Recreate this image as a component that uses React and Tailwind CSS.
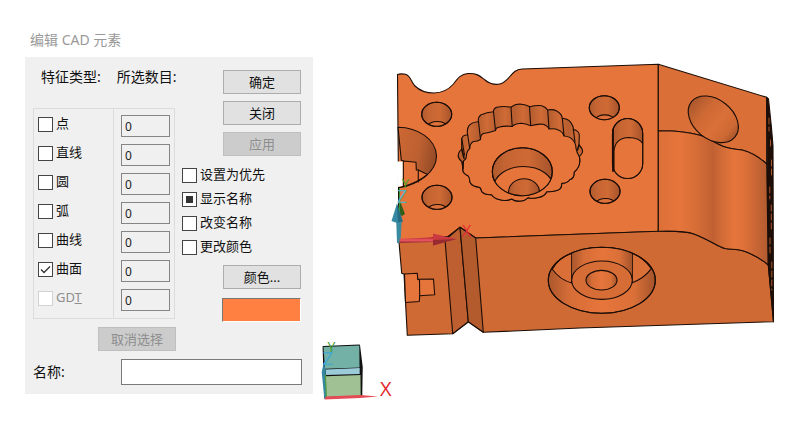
import { useEffect, useRef } from "react";

const FONT = 'font-["Noto_Sans","Noto_Sans_CJK_SC",sans-serif]';

const featureTypes = [
  { id: "point", label: "点" },
  { id: "line", label: "直线" },
  { id: "circle", label: "圆" },
  { id: "arc", label: "弧" },
  { id: "curve", label: "曲线" },
  { id: "surface", label: "曲面", checked: true },
  { id: "gdt", label: "GDT", disabled: true },
];

const options = [
  { id: "priority", label: "设置为优先" },
  { id: "showName", label: "显示名称", mixed: true },
  { id: "rename", label: "改变名称" },
  { id: "recolor", label: "更改颜色" },
];

function CheckBox({ id, checked, mixed, disabled }) {
  const ref = useRef(null);
  useEffect(() => {
    if (ref.current) ref.current.indeterminate = Boolean(mixed);
  }, [mixed]);
  return (
    <span className="relative flex size-[15px] shrink-0">
      <input
        ref={ref}
        id={id}
        type="checkbox"
        defaultChecked={checked}
        disabled={disabled}
        className="peer size-[15px] appearance-none border border-[#444] bg-white disabled:border-[#d2d2d2]"
      />
      <svg
        viewBox="0 0 15 15"
        className="pointer-events-none absolute inset-0 hidden size-[15px] peer-checked:block"
      >
        <path d="M3 7.5 6 10.5 12 4.5" fill="none" stroke="#333" strokeWidth="1.3" />
      </svg>
      <span className="pointer-events-none absolute inset-[4px] hidden bg-[#333] peer-indeterminate:block" />
    </span>
  );
}

function Button({ children, disabled }) {
  return (
    <button
      type="button"
      disabled={disabled}
      className="h-6 w-[78px] border border-[#adadad] bg-[#e1e1e1] text-[13px] leading-5 text-[#111] disabled:border-[#bfbfbf] disabled:bg-[#cccccc] disabled:text-[#8e8e8e]"
    >
      {children}
    </button>
  );
}

function EditDialog() {
  return (
    <form className="w-72 shrink-0 text-[#111]">
      <h1 className="h-8 px-[5px] text-sm leading-[30px] text-[#999]">编辑 CAD 元素</h1>
      <div className="bg-[#f0f0f0] px-2 pt-[9px] pb-[9px]">
        <div className="flex gap-[7px]">
          <div className="w-[142px]">
            <div className="flex h-[42px] gap-4 px-2 text-sm leading-[22px] whitespace-nowrap">
              <span>特征类型:</span>
              <span>所选数目:</span>
            </div>
            <fieldset className="border border-[#dcdcdc]">
              {featureTypes.map((f, i) => (
                <div key={f.id} className="flex h-[29px] first:h-[30px] last:h-[34px]">
                  <div
                    className={
                      "flex w-20 items-start gap-[3px] border-r border-[#dcdcdc] pl-1 " +
                      (i === 0 ? "pt-2" : "pt-[7px]")
                    }
                  >
                    <CheckBox id={f.id} checked={f.checked} disabled={f.disabled} />
                    <label
                      htmlFor={f.id}
                      className={
                        "text-[13px] leading-[13px] " + (f.disabled ? "text-[#8e8e8e]" : "")
                      }
                    >
                      {f.id === "gdt" ? (
                        <>
                          GD<u>T</u>
                        </>
                      ) : (
                        f.label
                      )}
                    </label>
                  </div>
                  <div className={"pl-[7px] " + (i === 0 ? "pt-1.5" : "pt-[5px]")}>
                    <input
                      aria-label={f.label}
                      readOnly
                      defaultValue="0"
                      className="block h-[22px] w-[49px] border border-[#858585] bg-transparent px-[3px] text-xs text-[#222]"
                    />
                  </div>
                </div>
              ))}
            </fieldset>
          </div>

          <div className="flex-1 pt-1">
            <div className="flex flex-col items-end gap-[7px] pr-1">
              <Button>确定</Button>
              <Button>关闭</Button>
              <Button disabled>应用</Button>
            </div>
            <div className="flex flex-col gap-[9px] pt-3">
              {options.map((o) => (
                <div key={o.id} className="flex gap-[3px]">
                  <CheckBox id={o.id} mixed={o.mixed} />
                  <label htmlFor={o.id} className="text-[13px] leading-[13px]">
                    {o.label}
                  </label>
                </div>
              ))}
            </div>
            <div className="flex flex-col items-end gap-[9px] pt-[10px] pr-1">
              <Button>颜色...</Button>
              <div className="h-6 w-[79px] border border-t-[#777] border-r-white border-b-white border-l-[#777] bg-[#ff8040]" />
            </div>
          </div>
        </div>
        <div className="flex pt-[5px] pl-[65px]">
          <Button disabled>取消选择</Button>
        </div>
        <div className="flex items-center pt-2 pr-[3px]">
          <label htmlFor="name" className="w-[88px] text-sm">
            名称:
          </label>
          <input
            id="name"
            type="text"
            className="h-[26px] min-w-0 flex-1 border border-[#7a7a7a] bg-white px-1 text-sm"
          />
        </div>
      </div>
    </form>
  );
}

const holes = [
  [436.7, 114.3],
  [437, 197.3],
  [604.3, 107.7],
  [605, 191.3],
];

const ribs = [
  "M461.700 138.500 464.500 155",
  "M467.700 135 469.700 148.500",
  "M478.500 121.700 480.500 139.500",
  "M493.500 111.700 495.500 130.500",
  "M511 107.300 512.200 126.300",
  "M529.500 106.700 530.700 125.500",
  "M547.700 110 549 128.500",
  "M562.300 118.300 564 135.500",
  "M573.300 129.300 575 142",
];

const SCALLOPS =
  "L579.300 156.700Q581.500 166 574 172.300Q574.500 178 570 179.500 567 183.500 561.700 183.300Q562 189 556.700 190.500 551 192 546.700 191.700Q545 196 538.300 197.500 533 199 528.300 197.700Q524 201.500 520 201 515 201.500 511.700 199Q505 201.500 500 199.700 494 198.500 491.700 194.700Q485 195 481.700 191.700 481 188 479.300 187.300 472 186.500 470 182.300 470 178 468.300 176 462 173 463 168.500";

function ModelView() {
  return (
    <svg
      viewBox="313 0 488 428"
      role="img"
      aria-label="CAD"
      className="block h-auto min-w-0 flex-1 font-['Open_Sans',sans-serif]"
    >
      <defs>
        <linearGradient id="hole">
          <stop offset="0" stopColor="#b05a2e" />
          <stop offset=".25" stopColor="#c66533" />
          <stop offset=".6" stopColor="#cf6a35" />
          <stop offset="1" stopColor="#a5532b" />
        </linearGradient>
        <linearGradient id="wall" gradientUnits="userSpaceOnUse" x1="658" y1="0" x2="768" y2="0">
          <stop offset="0" stopColor="#dc7038" />
          <stop offset=".2" stopColor="#e6753b" />
          <stop offset=".34" stopColor="#d76e37" />
          <stop offset=".5" stopColor="#c06032" />
          <stop offset=".6" stopColor="#d56d37" />
          <stop offset=".69" stopColor="#e6753b" />
          <stop offset=".78" stopColor="#df7139" />
          <stop offset="1" stopColor="#b15b30" />
        </linearGradient>
        <linearGradient id="tilt" x1="0" y1="0" x2="1" y2="0">
          <stop offset="0" stopColor="#ab572d" />
          <stop offset=".3" stopColor="#cd6934" />
          <stop offset=".6" stopColor="#db7039" />
          <stop offset=".85" stopColor="#cd6934" />
          <stop offset="1" stopColor="#a9562c" />
        </linearGradient>
        <linearGradient id="bore">
          <stop offset="0" stopColor="#ab572d" />
          <stop offset=".2" stopColor="#d66d37" />
          <stop offset=".5" stopColor="#e6753b" />
          <stop offset=".8" stopColor="#da7038" />
          <stop offset="1" stopColor="#a5532b" />
        </linearGradient>
        <linearGradient id="rim" gradientUnits="userSpaceOnUse" x1="460" y1="0" x2="478" y2="0" spreadMethod="repeat">
          <stop offset="0" stopColor="#b85e30" />
          <stop offset=".5" stopColor="#cf6b36" />
          <stop offset="1" stopColor="#b85e30" />
        </linearGradient>
        <linearGradient id="recess" x1="0" y1="0" x2="1" y2=".3">
          <stop offset="0" stopColor="#cd6834" />
          <stop offset=".6" stopColor="#bd6031" />
          <stop offset="1" stopColor="#984c27" />
        </linearGradient>
        <linearGradient id="shaft" x1="0" y1="0" x2="0" y2="1">
          <stop offset="0" stopColor="#b12332" />
          <stop offset=".5" stopColor="#ee5a63" />
          <stop offset="1" stopColor="#8f2530" />
        </linearGradient>
        <clipPath id="center">
          <ellipse cx="522.300" cy="171.700" rx="30" ry="24" />
        </clipPath>
        <clipPath id="smallHole">
          <ellipse cx="0" cy="0" rx="15" ry="12" />
        </clipPath>
        <clipPath id="slot">
          <rect x="612.500" y="118.500" width="30.200" height="60" rx="15.100" ry="15" />
        </clipPath>
      </defs>

      <g stroke="#1b0d06" strokeWidth="1.100" strokeLinejoin="round" strokeLinecap="round">
        {/* top face with its wavy upper edge */}
        <path
          fill="#e6753b"
          d="M397.500 74.500Q401 73.300 405.500 74.300C411 76 411 82 415 86C420 91 427 93 434 93C442 93 449 89 453.500 84C458 78 461 74 468 73.500C478 73 481 77 485 80C489 83.500 494 84.500 498 84.300C510 83 510 69.500 522 69L658.300 64.300 658.300 231.300 475.700 238 460 227.300 448 236.500 399 242Z"
        />
        {/* front face */}
        <path
          fill="#cf6a35"
          d="M399 242 448 236.500 475.700 238 658.300 231.300C672 231 684 230.500 694 234C710 240 718 247 725 248.500C736 250 741 248.500 751 254Q760 258 768.300 265L773.500 321.700 580 328 483.300 332.300 468.300 321.700 452.700 333.700 407.300 335.300 404 274 401.700 273.300Z"
        />
        {/* groove */}
        <path fill="#bd5f30" d="M445 240 460 227.300 468.300 321.700 452.700 333.700Z" />
        <path fill="#b35b2d" d="M460 227.300 475.700 238 483.300 332.300 468.300 321.700Z" />
        {/* side faces */}
        <path
          fill="#db6f38"
          d="M658.300 64.300 766.700 97.300 766.700 164C758 156 750 152 742 150C735 149 728 149 720 145C712 141 708 138 703 136.300C690 131.500 675 130.700 658.300 130.700Z"
        />
        <path
          fill="url(#wall)"
          d="M658.300 130.700C675 130.700 690 131.500 703 136.300C708 138 712 141 720 145C728 149 735 149 742 150C750 152 758 156 766.700 164L768.300 265Q760 258 751 254C741 248.500 736 250 725 248.500C718 247 710 240 694 234C684 230.500 672 231 658.300 231.300Z"
        />
        <path fill="#1d0e07" d="M766.700 97.300 768.500 99 771.500 128 773 146 773.500 321.700 768.300 265Z" />
        <path
          d="M769 118V131M770.500 140V149M771.500 160V178M769.800 187V199M771.300 205V230M770 238V255M771.800 262V290"
          stroke="#a8562d"
          strokeWidth="1"
          strokeDasharray="6 3"
        />
        <ellipse cx="713.300" cy="119.300" rx="28" ry="19.700" transform="rotate(39 713.300 119.300)" fill="url(#tilt)" />

        {/* left recess */}
        <path
          fill="url(#recess)"
          d="M398 127.200C418 127.500 436 139 436.500 156C436.500 172 418 185 399 187.700L403.300 186 403.300 161 401.300 160.300Z"
        />
        <path fill="#e6753b" d="M403.300 161 416 162.300 416.300 170 418.300 170 427.500 174.500Q417 183 403.300 186.500Z" />
        <path fill="none" d="M418.300 170V182" />
        <path d="M396.500 161.500 402.700 161.500 402.700 186 397.500 187Z" fill="#fff" stroke="none" />

        {/* small holes */}
        {holes.map(([x, y]) => (
          <g key={`${x}-${y}`} transform={`translate(${x} ${y})`}>
            <ellipse rx="15" ry="12" fill="url(#hole)" />
            <g clipPath="url(#smallHole)">
              <ellipse cx=".5" cy="11.500" rx="9" ry="4.300" fill="#dd7139" />
            </g>
            <ellipse rx="15" ry="12" fill="none" />
          </g>
        ))}

        {/* slot */}
        <rect x="612.500" y="118.500" width="30.200" height="60" rx="15.100" ry="15" fill="url(#hole)" />
        <g clipPath="url(#slot)">
          <path fill="#e6753b" d="M614 180V151Q615 138 629 137.500 640 138 643 144V180Z" />
        </g>
        <rect x="612.500" y="118.500" width="30.200" height="60" rx="15.100" ry="15" fill="none" />
        <path d="M613 130V171" strokeWidth="1.800" />

        {/* scalloped pocket */}
        <path
          fill="url(#rim)"
          d={
            "M463 168.500 461.700 161.700Q456 157 459.500 151.500L461.700 149 461.700 138.500Q463 134.500 467.700 135 466.500 129 469 125.700 472 122 478.300 121.700 478 117 480.700 115 487 112 493.300 111.700 493.500 108.500 496.700 107.300 504 105.700 510.700 107.300 515 104 520 104 526 104.500 530 106.700 536 105 541.700 105.700 546 107 547.700 110 553 109 556.700 111 562 114 562.300 118.300 568 118.800 570.700 122.300 573.500 126 573.300 129.300 579 131 579.300 135L579 145Q584.500 150.500 581.500 154" +
            SCALLOPS +
            "Z"
          }
        />
        <path
          fill="#e6753b"
          d={
            "M463 168.500 463.500 161 466 158.500Q466.500 151 469.700 148.500 470 143 473.500 141.500 478 141.500 480.500 139.500 480.500 134.500 483.500 133.500 490 132.500 495.500 130.500 495.500 128 498.500 127.300 505 125.500 512 126.500 516 123.300 521.700 123.300 527 124 530.700 125.700 538 123.500 543.300 124.300 548 126 549 129 555 128.300 558.300 130 563 132 564 136 570 136.500 572.300 139.300 576 143 576 148.300 577 153 578.500 155" +
            SCALLOPS +
            "Z"
          }
        />
        {ribs.map((d) => (
          <path key={d} d={d} fill="none" />
        ))}
        <path fill="none" d="M461.700 149 464 158M579 145 577.500 150M462.800 162V169" strokeWidth="1.600" />
        <ellipse cx="522.300" cy="171.700" rx="30" ry="24" fill="url(#hole)" />
        <g clipPath="url(#center)">
          <ellipse cx="523.500" cy="188" rx="30" ry="21.500" fill="#e6753b" />
          <ellipse cx="524" cy="192" rx="15.500" ry="13.300" fill="url(#hole)" />
        </g>
        <ellipse cx="522.300" cy="171.700" rx="30" ry="24" fill="none" />

        {/* counterbore on the front face */}
        <ellipse cx="601.800" cy="280.300" rx="53.500" ry="33" fill="url(#bore)" />
        <path fill="#db6f38" d="M552.300 269.300Q558 258 571.700 253.300V283Q560 280 552.300 269.300Z" />
        <path fill="#db6f38" d="M651.300 268.700Q644 258 632.300 253.300V282.700Q644 278.500 651.300 268.700Z" />
        <path fill="url(#bore)" stroke="none" d="M572.300 253Q602 243 631.700 253V280H572.300Z" />
        <ellipse cx="601.800" cy="280.300" rx="53.500" ry="33" fill="none" />
        <ellipse cx="602" cy="280.200" rx="30.300" ry="19.200" fill="#d66d37" />
        <ellipse cx="601.500" cy="280.200" rx="15.500" ry="9.800" fill="url(#bore)" />

        {/* keyed notch */}
        <path
          fill="#e6753b"
          d="M404.500 274 417.300 273.300 417.700 279.300 433.500 279 434.700 294.700 419.700 295.700 419.300 301.500 405.500 302.500Z"
        />
        <path fill="none" d="M417.700 279.300 419.500 280 419.700 295.700" />
      </g>

      {/* part coordinate axes */}
      <g fontSize="16" textAnchor="middle">
        <path d="M400 201 405 214 402 216 397.500 213Z" fill="#315e1b" />
        <path d="M399.500 188V240" stroke="#2f9b30" strokeWidth="1" />
        <path d="M396.200 220H401.700L400.500 243H397Z" fill="#3b8ba0" />
        <path d="M391.500 221 397 203.500 402.800 221.500 397 223Z" fill="#3589a2" />
        <path d="M396.800 203.500 402.800 221.500 398 222.500Z" fill="#276b83" />
        <path d="M399.500 239 434 237.300V242L399.500 243Z" fill="url(#shaft)" />
        <path d="M433 233.500 456.500 239 433 245.500Z" fill="#c93a41" />
        <path d="M433 240 456.500 239 433 245.500Z" fill="#982b30" />
        <text x="466.500" y="237" fill="#e32e35">X</text>
        <text x="405.500" y="187.500" fontSize="13" fill="#46a52e">Y</text>
        <text x="402" y="202.500" fontSize="18" fill="#55b1c4">Z</text>
      </g>

      {/* view orientation cube */}
      <g strokeLinejoin="round">
        <path d="M323.300 346.700 359.300 345.300 362 367 361.500 396 325 398Z" fill="#111" stroke="#111" strokeWidth="1.500" />
        <path d="M323.500 347 359.300 345.500 359.500 367.500 325 368.700Z" fill="#73b0a6" />
        <path d="M325.500 369.500 359.700 368V374L326 375Z" fill="#9bcbd9" />
        <path d="M326 376.200 360.500 375 360.700 396 326 397Z" fill="#9fc193" />
        <path d="M323.700 363 321.700 372 324.300 398.500 326.700 398.500 325.500 369Z" fill="#3588a0" />
        <path d="M325.500 375 326.300 397" stroke="#55a333" />
        <path d="M324.500 399.500 326 396.500 360 395 378 396.500 360 398Z" fill="#e44b55" />
      </g>
      <g textAnchor="middle">
        <text x="331.300" y="352" fontSize="14" fill="#3f9b32">Y</text>
        <text x="328" y="364.500" fontSize="18" fill="#42a9d2">Z</text>
        <text x="385.700" y="396" fontSize="20" fill="#e32930">X</text>
      </g>
    </svg>
  );
}

export default function App() {
  return (
    <main className={"flex items-start bg-white " + FONT}>
      <div className="pt-[25px] pl-[25px]">
        <EditDialog />
      </div>
      <ModelView />
    </main>
  );
}
